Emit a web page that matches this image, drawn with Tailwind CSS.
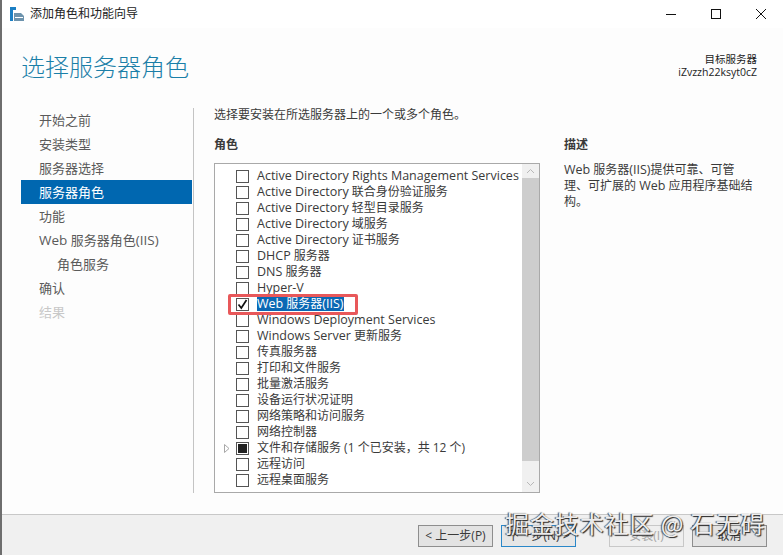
<!DOCTYPE html>
<html lang="zh-CN">
<head>
  <meta charset="UTF-8">
  <title>添加角色和功能向导</title>
  <script src="https://cdn.jsdelivr.net/npm/@tailwindcss/browser@4"></script>
</head>
<body class="relative w-[783px] h-[555px] overflow-hidden bg-[#fdfdfd] text-[#3a3a3a] border-l-2 border-[#6e6e6e] font-['Open_Sans','Noto_Sans_CJK_SC',sans-serif] text-[12px]">

  <!-- title bar -->
  <div class="flex items-center h-[28px] bg-white pl-[8px]">
    <svg width="15" height="15" viewBox="0 0 15 15" class="mr-[5px]">
      <rect x="0" y="0" width="6" height="3" fill="#1b7fc4"/>
      <rect x="0" y="3" width="3" height="11" fill="#1b7fc4"/>
      <path d="M4 6h7l3 3v5H4z" fill="#6d93ad"/>
      <rect x="5" y="10" width="8" height="1" fill="#fff"/>
    </svg>
    <span class="text-[12px] text-[#222]">添加角色和功能向导</span>
    <div class="ml-auto flex items-center gap-[33px] pr-[16px]">
      <svg width="12" height="12" viewBox="0 0 12 12"><path d="M1 6.5h10" stroke="#111" stroke-width="1"/></svg>
      <svg width="12" height="12" viewBox="0 0 12 12"><rect x="1.5" y="1.5" width="9" height="9" fill="none" stroke="#111"/></svg>
      <svg width="12" height="12" viewBox="0 0 12 12"><path d="M1 1l10 10M11 1L1 11" stroke="#111" stroke-width="1"/></svg>
    </div>
  </div>

  <!-- header -->
  <div class="flex justify-between h-[80px] pl-[19px] pr-[26px]">
    <h1 class="text-[24px] leading-[36px] pt-[20px] text-[#1b7fa8] font-light font-['Noto_Sans_CJK_SC',sans-serif]">选择服务器角色</h1>
    <div class="text-right text-[10.5px] leading-[13px] text-[#222] pt-[25px]">
      <div>目标服务器</div>
      <div>iZvzzh22ksyt0cZ</div>
    </div>
  </div>

  <!-- body -->
  <div class="flex h-[385px] pl-[19px]">
    <nav class="w-[171px] text-[#5a5a5a] text-[13px]">
      <div class="h-[24px] leading-[24px] pl-[18px]">开始之前</div>
      <div class="h-[24px] leading-[24px] pl-[18px]">安装类型</div>
      <div class="h-[24px] leading-[24px] pl-[18px]">服务器选择</div>
      <div class="h-[24px] leading-[24px] pl-[18px] bg-[#0067b0] text-white">服务器角色</div>
      <div class="h-[24px] leading-[24px] pl-[18px]">功能</div>
      <div class="h-[24px] leading-[24px] pl-[18px]"><span class="text-[13.5px]">Web</span> 服务器角色<span class="text-[13.5px]">(IIS)</span></div>
      <div class="h-[24px] leading-[24px] pl-[36px]">角色服务</div>
      <div class="h-[24px] leading-[24px] pl-[18px]">确认</div>
      <div class="h-[24px] leading-[24px] pl-[18px] text-[#c8c8c8]">结果</div>
    </nav>
    <div class="w-px ml-px bg-[#c4c4c4]"></div>

    <main class="flex-1 pl-[20px]">
      <p class="h-[30px] leading-[14px]">选择要安装在所选服务器上的一个或多个角色。</p>
      <div class="flex">
        <section class="w-[326px]">
          <div class="h-[25px] leading-[14px] font-semibold">角色</div>
          <div class="relative flex w-[326px] h-[330px] border border-[#a9a9a9] bg-white">
            <ul class="flex-1 pt-[4px]">
              <li class="flex items-center h-[16px] text-[12.5px]"><span class="w-[13px] h-[13px] ml-[21px] mr-[8px] border border-[#555] bg-white"></span>Active Directory Rights Management Services</li>
              <li class="flex items-center h-[16px]"><span class="w-[13px] h-[13px] ml-[21px] mr-[8px] border border-[#555] bg-white"></span><span><span class="text-[12.5px]">Active Directory</span> 联合身份验证服务</span></li>
              <li class="flex items-center h-[16px]"><span class="w-[13px] h-[13px] ml-[21px] mr-[8px] border border-[#555] bg-white"></span><span><span class="text-[12.5px]">Active Directory</span> 轻型目录服务</span></li>
              <li class="flex items-center h-[16px]"><span class="w-[13px] h-[13px] ml-[21px] mr-[8px] border border-[#555] bg-white"></span><span><span class="text-[12.5px]">Active Directory</span> 域服务</span></li>
              <li class="flex items-center h-[16px]"><span class="w-[13px] h-[13px] ml-[21px] mr-[8px] border border-[#555] bg-white"></span><span><span class="text-[12.5px]">Active Directory</span> 证书服务</span></li>
              <li class="flex items-center h-[16px]"><span class="w-[13px] h-[13px] ml-[21px] mr-[8px] border border-[#555] bg-white"></span><span><span class="text-[12.5px]">DHCP</span> 服务器</span></li>
              <li class="flex items-center h-[16px]"><span class="w-[13px] h-[13px] ml-[21px] mr-[8px] border border-[#555] bg-white"></span><span><span class="text-[12.5px]">DNS</span> 服务器</span></li>
              <li class="flex items-center h-[16px] text-[12.5px]"><span class="w-[13px] h-[13px] ml-[21px] mr-[8px] border border-[#555] bg-white"></span>Hyper-V</li>
              <li class="flex items-center h-[16px]">
                <span class="flex items-center justify-center w-[13px] h-[13px] ml-[21px] mr-[8px] border border-[#555] bg-white">
                  <svg width="11" height="11" viewBox="0 0 11 11"><path d="M1.5 5.5l2.8 3.5L9.5 1" fill="none" stroke="#111" stroke-width="1.7"/></svg>
                </span><span class="bg-[#0a68b4] text-white h-[14px] leading-[14px]"><span class="text-[12.5px]">Web</span> 服务器<span class="text-[12.5px]">(IIS)</span></span>
              </li>
              <li class="flex items-center h-[16px] text-[12.5px]"><span class="w-[13px] h-[13px] ml-[21px] mr-[8px] border border-[#555] bg-white"></span>Windows Deployment Services</li>
              <li class="flex items-center h-[16px]"><span class="w-[13px] h-[13px] ml-[21px] mr-[8px] border border-[#555] bg-white"></span><span><span class="text-[12.5px]">Windows Server</span> 更新服务</span></li>
              <li class="flex items-center h-[16px]"><span class="w-[13px] h-[13px] ml-[21px] mr-[8px] border border-[#555] bg-white"></span>传真服务器</li>
              <li class="flex items-center h-[16px]"><span class="w-[13px] h-[13px] ml-[21px] mr-[8px] border border-[#555] bg-white"></span>打印和文件服务</li>
              <li class="flex items-center h-[16px]"><span class="w-[13px] h-[13px] ml-[21px] mr-[8px] border border-[#555] bg-white"></span>批量激活服务</li>
              <li class="flex items-center h-[16px]"><span class="w-[13px] h-[13px] ml-[21px] mr-[8px] border border-[#555] bg-white"></span>设备运行状况证明</li>
              <li class="flex items-center h-[16px]"><span class="w-[13px] h-[13px] ml-[21px] mr-[8px] border border-[#555] bg-white"></span>网络策略和访问服务</li>
              <li class="flex items-center h-[16px]"><span class="w-[13px] h-[13px] ml-[21px] mr-[8px] border border-[#555] bg-white"></span>网络控制器</li>
              <li class="relative flex items-center h-[16px]">
                <svg width="6" height="9" viewBox="0 0 6 9" class="absolute left-[9px] top-[4px]"><path d="M.5.5l4.5 4-4.5 4z" fill="none" stroke="#a8a8a8"/></svg>
                <span class="flex items-center justify-center w-[13px] h-[13px] ml-[21px] mr-[8px] border border-[#555] bg-white"><span class="w-[9px] h-[9px] bg-[#222]"></span></span>文件和存储服务 (1 个已安装，共 12 个)
              </li>
              <li class="flex items-center h-[16px]"><span class="w-[13px] h-[13px] ml-[21px] mr-[8px] border border-[#555] bg-white"></span>远程访问</li>
              <li class="flex items-center h-[16px]"><span class="w-[13px] h-[13px] ml-[21px] mr-[8px] border border-[#555] bg-white"></span>远程桌面服务</li>
            </ul>
            <!-- scrollbar -->
            <div class="flex flex-col w-[17px] bg-[#f0f0f0]">
              <div class="flex items-center justify-center h-[14px]"><svg width="9" height="6" viewBox="0 0 9 6"><path d="M1 5l3.5-3.5L8 5" fill="none" stroke="#b8b8b8"/></svg></div>
              <div class="h-[283px] bg-[#cdcdcd]"></div>
              <div class="flex-1 flex items-end justify-center pb-[5px]"><svg width="9" height="6" viewBox="0 0 9 6"><path d="M1 1l3.5 3.5L8 1" fill="none" stroke="#b8b8b8"/></svg></div>
            </div>
            <!-- red annotation -->
            <div class="absolute left-[13px] top-[130px] w-[130px] h-[21px] border-[3px] border-[#e8585a] rounded-[2px]"></div>
          </div>
        </section>
        <aside class="pl-[24px] w-[217px]">
          <div class="h-[25px] leading-[14px] font-semibold">描述</div>
          <p class="leading-[16px] -mt-[1px] whitespace-nowrap"><span class="text-[12.5px]">Web</span> 服务器<span class="text-[12.5px]">(IIS)</span>提供可靠、可管<br>理、可扩展的 <span class="text-[12.5px]">Web</span> 应用程序基础结<br>构。</p>
        </aside>
      </div>
    </main>
  </div>

  <!-- footer -->
  <div class="absolute left-0 right-0 bottom-0 h-[41px] bg-[#f0f0f0] border-t border-[#c8c8c8]">
    <div class="flex items-center pt-[10px] pl-[416px] text-[12px]">
      <button class="w-[75px] h-[22px] border border-[#8e8e8e] bg-[#e3e3e3]">&lt; 上一步(P)</button>
      <button class="w-[75px] h-[22px] ml-[8px] border border-[#2a87c8] bg-[#e6e6e6]">下一步(N) &gt;</button>
      <button class="w-[75px] h-[22px] ml-[33px] border border-[#c8c8c8] bg-[#efefef] text-[#a8a8a8]">安装(I)</button>
      <button class="w-[75px] h-[22px] ml-[8px] border border-[#8e8e8e] bg-[#e3e3e3]">取消</button>
    </div>
  </div>

  <!-- watermark -->
  <div class="absolute left-[503px] top-[508px] text-[24px] leading-[30px] tracking-[0.9px] whitespace-nowrap text-white/90 [text-shadow:1px_1px_1px_#222,-1px_0_1px_#444] font-['Noto_Sans_CJK_SC',sans-serif]">掘金技术社区 @ 石无碍</div>
</body>
</html>
